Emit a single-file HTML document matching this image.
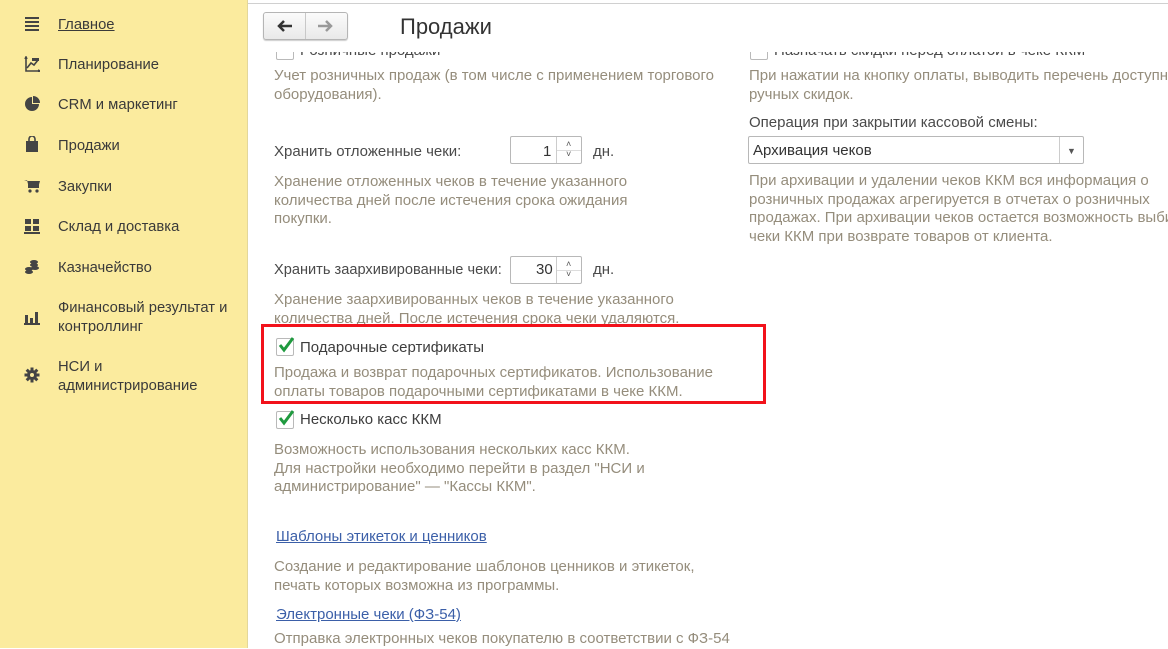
<!DOCTYPE html>
<html><head><meta charset="utf-8"><style>
*{margin:0;padding:0;box-sizing:border-box}
body{width:1168px;height:648px;overflow:hidden;background:#fff;font-family:"Liberation Sans",Arial,sans-serif;font-size:15px;position:relative}
.a{position:absolute;white-space:nowrap;line-height:18.5px;margin-top:1px}
.sb{position:absolute;left:0;top:0;width:248px;height:648px;background:#fbeb9e;border-right:1px solid #e3d79a}
.sb .t{position:absolute;left:58px;color:#3a3a3a;font-size:14.8px;line-height:19px;margin-top:1px}
.ic{position:absolute;left:24px;width:16px;height:16px}
.d{color:#958d7c}
.l{color:#4a4a4a}
.lnk{color:#3b5fa8;text-decoration:underline}
.inp{position:absolute;border:1px solid #b8b8b8;border-radius:2px;background:#fff}
.cb{position:absolute;width:18px;height:18px;border:1px solid #b9b9b9;border-radius:2px;background:#fff}
</style></head><body>
<div style="position:absolute;left:0;top:0;width:1168px;height:4px;border-bottom:1px solid #d0d0d0;background:#fff"></div>
<div class="sb">
 <svg class="ic" style="top:16px" viewBox="0 0 16 16"><g fill="#444"><rect x="1" y="1" width="14" height="2"/><rect x="1" y="5" width="14" height="2"/><rect x="1" y="9" width="14" height="2"/><rect x="1" y="13" width="14" height="2"/></g></svg>
 <div class="t" style="top:15px;text-decoration:underline">Главное</div>
 <svg class="ic" style="top:56px" viewBox="0 0 16 16"><g fill="none" stroke="#444" stroke-width="1.6"><path d="M2 1v14h13M1 3l1-2 1 2M14 14l2 1-2 1"/><path d="M3 12l4-5 3 2 4-5"/></g><rect x="8" y="2" width="7" height="3" fill="#444"/></svg>
 <div class="t" style="top:55px">Планирование</div>
 <svg class="ic" style="top:96px" viewBox="0 0 16 16"><path d="M8 1a7 7 0 1 0 7 7H8z" fill="#444"/><path d="M9 0v7h7a7 7 0 0 0-7-7z" fill="#444"/></svg>
 <div class="t" style="top:95px">CRM и маркетинг</div>
 <svg class="ic" style="top:136px" viewBox="0 0 16 16"><rect x="2" y="5" width="12" height="11" fill="#444"/><path d="M5 6V3a3 3 0 0 1 6 0v3" fill="none" stroke="#444" stroke-width="1.6"/></svg>
 <div class="t" style="top:136px">Продажи</div>
 <svg class="ic" style="top:178px" viewBox="0 0 16 16"><path d="M0 2h3l2 8h9l2-7H4" fill="#444"/><rect x="4" y="3" width="11" height="7" fill="#444"/><circle cx="6" cy="13" r="1.6" fill="#444"/><circle cx="13" cy="13" r="1.6" fill="#444"/></svg>
 <div class="t" style="top:177px">Закупки</div>
 <svg class="ic" style="top:218px" viewBox="0 0 16 16"><g fill="#444"><rect x="1" y="1" width="6" height="5"/><rect x="9" y="1" width="6" height="5"/><rect x="1" y="8" width="6" height="5"/><rect x="9" y="8" width="6" height="5"/><rect x="0" y="14" width="16" height="2"/></g></svg>
 <div class="t" style="top:217px">Склад и доставка</div>
 <svg class="ic" style="top:259px" viewBox="0 0 16 16"><g fill="#444"><ellipse cx="5" cy="10" rx="4" ry="2"/><ellipse cx="5" cy="13" rx="4" ry="2"/><ellipse cx="10" cy="3" rx="4" ry="2"/><ellipse cx="10" cy="6" rx="4" ry="2"/><ellipse cx="11" cy="9" rx="4" ry="2"/></g></svg>
 <div class="t" style="top:258px">Казначейство</div>
 <svg class="ic" style="top:309px" viewBox="0 0 16 16"><g fill="#444"><rect x="1" y="6" width="3" height="9"/><rect x="6" y="9" width="3" height="6"/><rect x="11" y="3" width="3" height="12"/><rect x="0" y="14" width="16" height="2"/></g></svg>
 <div class="t" style="top:298px">Финансовый результат и<br>контроллинг</div>
 <svg class="ic" style="top:367px" viewBox="0 0 16 16"><g fill="#444"><circle cx="8" cy="8" r="5"/><rect x="6.5" y="0.5" width="3" height="15"/><rect x="0.5" y="6.5" width="15" height="3"/><rect x="6.5" y="0.5" width="3" height="15" transform="rotate(45 8 8)"/><rect x="6.5" y="0.5" width="3" height="15" transform="rotate(-45 8 8)"/></g><circle cx="8" cy="8" r="2" fill="#fbeb9e"/></svg>
 <div class="t" style="top:357px">НСИ и<br>администрирование</div>
</div>

<div class="cb" style="left:276px;top:42px"></div>
<div class="a l" style="left:300px;top:41px">Розничные продажи</div>
<div class="cb" style="left:750px;top:42px"></div>
<div class="a l" style="left:774px;top:41px">Назначать скидки перед оплатой в чеке ККМ</div>
<div style="position:absolute;left:249px;top:5px;width:919px;height:47px;background:#fff"></div>
<div style="position:absolute;left:263px;top:12px;width:85px;height:28px;border:1px solid #b5b5b5;border-radius:3px;background:linear-gradient(#fbfbfb,#e9e9e9);box-shadow:0 1px 1px #ccc"></div>
<div style="position:absolute;left:305px;top:13px;width:1px;height:26px;background:#c8c8c8"></div>
<svg style="position:absolute;left:276px;top:19px" width="18" height="14" viewBox="0 0 18 14"><path d="M16 7H3M8 2L3 7l5 5" fill="none" stroke="#333" stroke-width="2.5"/></svg>
<svg style="position:absolute;left:316px;top:19px" width="18" height="14" viewBox="0 0 18 14"><path d="M2 7h13M10 2l5 5-5 5" fill="none" stroke="#999" stroke-width="2.5"/></svg>
<div class="a" style="left:400px;top:13px;font-size:22px;line-height:26px;color:#333">Продажи</div>

<div class="a d" style="left:274px;top:66px">Учет розничных продаж (в том числе с применением торгового<br>оборудования).</div>
<div class="a l" style="left:274px;top:142px">Хранить отложенные чеки:</div>
<div class="inp" style="left:510px;top:136px;width:72px;height:28px"></div>
<div style="position:absolute;left:556px;top:137px;width:1px;height:26px;background:#ccc"></div>
<div style="position:absolute;left:557px;top:150px;width:24px;height:1px;background:#ddd"></div>
<div class="a" style="left:566px;top:138px;font-size:9px;color:#555;line-height:10px">˄<br>˅</div>
<div class="a l" style="left:543px;top:142px;color:#333">1</div>
<div class="a l" style="left:593px;top:142px">дн.</div>
<div class="a d" style="left:274px;top:172px">Хранение отложенных чеков в течение указанного<br>количества дней после истечения срока ожидания<br>покупки.</div>

<div class="a l" style="left:274px;top:260px;font-size:14.6px">Хранить заархивированные чеки:</div>
<div class="inp" style="left:510px;top:256px;width:72px;height:28px"></div>
<div style="position:absolute;left:556px;top:257px;width:1px;height:26px;background:#ccc"></div>
<div style="position:absolute;left:557px;top:270px;width:24px;height:1px;background:#ddd"></div>
<div class="a" style="left:566px;top:258px;font-size:9px;color:#555;line-height:10px">˄<br>˅</div>
<div class="a l" style="left:536px;top:260px;color:#333">30</div>
<div class="a l" style="left:593px;top:260px">дн.</div>
<div class="a d" style="left:274px;top:290px">Хранение заархивированных чеков в течение указанного<br>количества дней. После истечения срока чеки удаляются.</div>

<div style="position:absolute;left:261px;top:324px;width:505px;height:80px;border:3px solid #f2121b"></div>
<div class="cb" style="left:276px;top:338px"></div>
<svg style="position:absolute;left:277px;top:336px" width="18" height="18" viewBox="0 0 18 18"><path d="M3 9l4 5 9-12" fill="none" stroke="#1f9a3f" stroke-width="3"/></svg>
<div class="a l" style="left:300px;top:338px;color:#3d3d3d">Подарочные сертификаты</div>
<div class="a d" style="left:274px;top:363px">Продажа и возврат подарочных сертификатов. Использование<br>оплаты товаров подарочными сертификатами в чеке ККМ.</div>

<div class="cb" style="left:276px;top:411px"></div>
<svg style="position:absolute;left:277px;top:409px" width="18" height="18" viewBox="0 0 18 18"><path d="M3 9l4 5 9-12" fill="none" stroke="#1f9a3f" stroke-width="3"/></svg>
<div class="a l" style="left:300px;top:410px;color:#3d3d3d">Несколько касс ККМ</div>
<div class="a d" style="left:274px;top:440px">Возможность использования нескольких касс ККМ.<br>Для настройки необходимо перейти в раздел "НСИ и<br>администрирование" — "Кассы ККМ".</div>

<div class="a lnk" style="left:276px;top:527px">Шаблоны этикеток и ценников</div>
<div class="a d" style="left:274px;top:557px">Создание и редактирование шаблонов ценников и этикеток,<br>печать которых возможна из программы.</div>
<div class="a lnk" style="left:276px;top:605px">Электронные чеки (ФЗ-54)</div>
<div class="a d" style="left:274px;top:629px">Отправка электронных чеков покупателю в соответствии с ФЗ-54</div>

<div class="a d" style="left:749px;top:66px">При нажатии на кнопку оплаты, выводить перечень доступных<br>ручных скидок.</div>
<div class="a l" style="left:749px;top:113px">Операция при закрытии кассовой смены:</div>
<div class="inp" style="left:748px;top:136px;width:336px;height:28px"></div>
<div style="position:absolute;left:1059px;top:137px;width:1px;height:26px;background:#ccc"></div>
<div class="a" style="left:1067px;top:141px;font-size:9px;color:#555">▼</div>
<div class="a" style="left:753px;top:141px;color:#333">Архивация чеков</div>
<div class="a d" style="left:749px;top:171px">При архивации и удалении чеков ККМ вся информация о<br>розничных продажах агрегируется в отчетах о розничных<br>продажах. При архивации чеков остается возможность выбирать<br>чеки ККМ при возврате товаров от клиента.</div>
</body></html>
